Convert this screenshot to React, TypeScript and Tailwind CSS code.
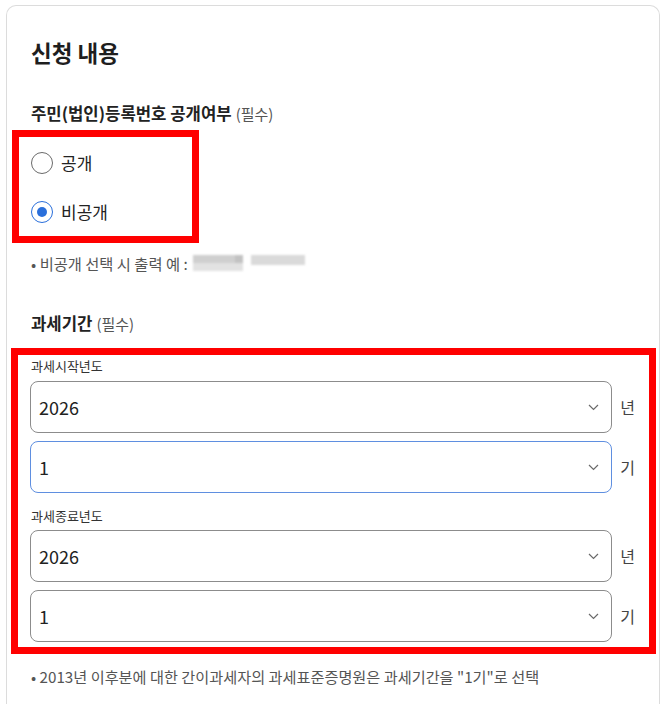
const font = "font-['Noto_Sans_CJK_KR','Noto_Sans',sans-serif]"

function Radio({ label, checked }: { label: string; checked?: boolean }) {
  return (
    <label className="flex items-center h-[24px] gap-[8px] w-fit">
      <span
        className={
          checked
            ? "flex items-center justify-center w-[22px] h-[22px] rounded-full border border-[#2a6fdb]"
            : "flex items-center justify-center w-[22px] h-[22px] rounded-full border border-[#6b6b6b]"
        }
      >
        {checked && <span className="w-[10px] h-[10px] rounded-full bg-[#2a6fdb]" />}
      </span>
      <span className="text-[17px] text-[#222]">{label}</span>
    </label>
  )
}

function Chevron() {
  return (
    <svg width="11" height="7" viewBox="0 0 11 7" fill="none">
      <polyline points="1,1 5.5,5.5 10,1" stroke="#6a6a6a" strokeWidth="1.2" />
    </svg>
  )
}

function SelectRow({ value, unit, focused }: { value: string; unit: string; focused?: boolean }) {
  return (
    <div className="flex items-center">
      <div
        className={
          focused
            ? "-ml-px w-[585px] h-[52px] flex items-center justify-between pl-[8px] pr-[12px] rounded-[8px] border border-[#5f8fe0]"
            : "-ml-px w-[585px] h-[52px] flex items-center justify-between pl-[8px] pr-[12px] rounded-[8px] border border-[#8c8c8c]"
        }
      >
        <span className="text-[18px] text-[#222]">{value}</span>
        <Chevron />
      </div>
      <span className="ml-[8px] text-[16px] text-[#444]">{unit}</span>
    </div>
  )
}

export default function App() {
  return (
    <div className={`${font} bg-white pt-[5px] px-[6px] h-[708px]`}>
      <div className="border border-b-0 border-[#dcdcdc] rounded-t-[10px] px-6 pt-[31px] pb-[18px]">
        <h2 className="text-[22.5px] leading-[30px] font-bold text-[#1e1e1e]">신청 내용</h2>

        <div className="mt-[34px] h-[24px] leading-[24px]">
          <span className="text-[16.7px] font-bold text-[#222]">주민(법인)등록번호 공개여부</span>
          <span className="ml-[4px] text-[15px] text-[#555]">(필수)</span>
        </div>

        <div className="relative mt-[26px] flex flex-col gap-[25px]">
          <Radio label="공개" />
          <Radio label="비공개" checked />
          {/* annotation box */}
          <div className="absolute left-[-19px] top-[-21px] w-[187px] bottom-[-19px] border-[7px] border-[#ff0000] pointer-events-none" />
        </div>

        <div className="mt-[29px] h-[20px] flex items-center text-[15.3px] text-[#555]">
          <span>• 비공개 선택 시 출력 예 :</span>
          <span className="ml-[5px] flex items-start gap-[8px]">
            <span className="flex flex-col blur-[1px]">
              <span className="flex">
                <span className="w-[42px] h-[8px] bg-[#cfcfcf]" />
                <span className="w-[8px] h-[8px] bg-[#c2c2c2]" />
              </span>
              <span className="w-[50px] h-[8px] bg-[#e2e2e2]" />
            </span>
            <span className="w-[54px] h-[10px] bg-[#dadada] blur-[1px]" />
          </span>
        </div>

        <div className="mt-[38px] h-[24px] leading-[24px]">
          <span className="text-[16.7px] font-bold text-[#222]">과세기간</span>
          <span className="ml-[4px] text-[15px] text-[#555]">(필수)</span>
        </div>

        <div className="relative mt-[22px]">
          <div className="text-[13px] leading-[18px] text-[#333]">과세시작년도</div>
          <div className="mt-[6px]">
            <SelectRow value="2026" unit="년" />
          </div>
          <div className="mt-[8px]">
            <SelectRow value="1" unit="기" focused />
          </div>
          <div className="mt-[14px] text-[13px] leading-[18px] text-[#333]">과세종료년도</div>
          <div className="mt-[5px]">
            <SelectRow value="2026" unit="년" />
          </div>
          <div className="mt-[8px]">
            <SelectRow value="1" unit="기" />
          </div>
          {/* annotation box */}
          <div className="absolute left-[-20px] top-[-9px] right-[-21px] bottom-[-12px] border-[7px] border-[#ff0000] pointer-events-none" />
        </div>

        <p className="mt-[24px] text-[15.2px] leading-[20px] text-[#555]">
          • 2013년 이후분에 대한 간이과세자의 과세표준증명원은 과세기간을 "1기"로 선택
        </p>
      </div>
    </div>
  )
}
